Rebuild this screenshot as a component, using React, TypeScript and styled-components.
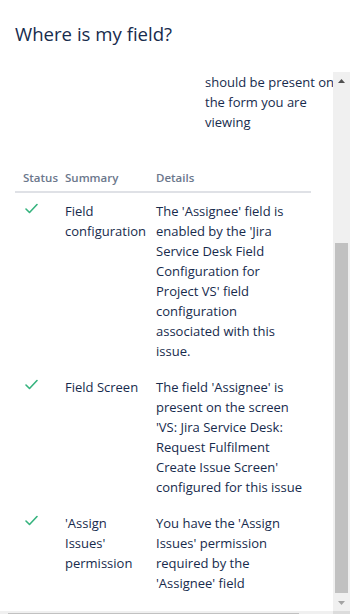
import React, { useLayoutEffect, useRef } from "react";
import styled, { createGlobalStyle } from "styled-components";

const GlobalStyle = createGlobalStyle`
  html, body {
    margin: 0;
    padding: 0;
    height: 100%;
    overflow: hidden;
    background: #fff;
  }
  body {
    font-family: "Segoe UI", "Open Sans", "Noto Sans", sans-serif;
    color: #172b4d;
  }
`;

interface ICheck {
  key: string;
  summary: string;
  details: string;
}

const checks: ICheck[] = [
  {
    key: "config",
    summary: "Field configuration",
    details:
      "The 'Assignee' field is enabled by the 'Jira Service Desk Field Configuration for Project VS' field configuration associated with this issue.",
  },
  {
    key: "screen",
    summary: "Field Screen",
    details:
      "The field 'Assignee' is present on the screen 'VS: Jira Service Desk: Request Fulfilment Create Issue Screen' configured for this issue",
  },
  {
    key: "permission",
    summary: "'Assign Issues' permission",
    details:
      "You have the 'Assign Issues' permission required by the 'Assignee' field",
  },
];

const CheckIcon = () => (
  <svg width="13" height="11" viewBox="0 0 13 11" fill="none">
    <polyline
      points="1,6 4.5,9.5 12,1.5"
      stroke="#36b37e"
      strokeWidth="1.6"
      strokeLinecap="round"
      strokeLinejoin="round"
    />
  </svg>
);

const Arrow = ({ up, color }: { up?: boolean; color: string }) => (
  <svg width="7" height="4" viewBox="0 0 7 4">
    <polygon points={up ? "0,4 3.5,0 7,4" : "0,0 3.5,4 7,0"} fill={color} />
  </svg>
);

const App = () => {
  const viewportRef = useRef<HTMLDivElement>(null);

  useLayoutEffect(() => {
    const el = viewportRef.current;
    if (el) el.scrollTop = el.scrollHeight;
  }, []);

  return (
    <>
      <GlobalStyle />
      <Page>
        <Title>Where is my field?</Title>
        <ScrollArea>
          <Viewport ref={viewportRef}>
            <Content>
              <ResultRow>
                <ResultLabel>Field</ResultLabel>
                <ResultValue>Assignee</ResultValue>
              </ResultRow>
              <ResultRow>
                <ResultLabel>Issue</ResultLabel>
                <ResultValue>VS-12</ResultValue>
              </ResultRow>
              <ResultRow>
                <ResultLabel>Result</ResultLabel>
                <ResultValue>
                  The 'Assignee' field should be present on the form you are
                  viewing
                </ResultValue>
              </ResultRow>
              <Table>
                <colgroup>
                  <col style={{ width: 42 }} />
                  <col style={{ width: 91 }} />
                  <col />
                </colgroup>
                <thead>
                  <tr>
                    <Th>Status</Th>
                    <Th>Summary</Th>
                    <Th>Details</Th>
                  </tr>
                </thead>
                <tbody>
                  {checks.map((c) => (
                    <tr key={c.key}>
                      <StatusCell>
                        <CheckIcon />
                      </StatusCell>
                      <Td>{c.summary}</Td>
                      <DetailsCell>{c.details}</DetailsCell>
                    </tr>
                  ))}
                </tbody>
              </Table>
            </Content>
          </Viewport>
          <VTrack>
            <ScrollButton>
              <Arrow up color="#505050" />
            </ScrollButton>
            <VThumbSlot>
              <VThumb />
            </VThumbSlot>
            <ScrollButton>
              <Arrow color="#a3a3a3" />
            </ScrollButton>
          </VTrack>
          <HTrack>
            <HThumb />
          </HTrack>
          <Corner />
        </ScrollArea>
      </Page>
    </>
  );
};

const Page = styled.div`
  display: flex;
  flex-direction: column;
`;
const Title = styled.h2`
  margin: 0;
  padding: 21px 15px 0;
  font-size: 18.6px;
  line-height: 26px;
  font-weight: 400;
  color: #172b4d;
`;
const ScrollArea = styled.div`
  margin-top: 25px;
  display: grid;
  grid-template-columns: 1fr 17px;
  grid-template-rows: 539px 17px;
`;
const Viewport = styled.div`
  overflow: hidden;
  min-width: 0;
`;
const Content = styled.div`
  width: 350px;
  padding: 0 0 10px 15px;
  box-sizing: border-box;
  font-size: 13px;
  line-height: 20px;
`;
const ResultRow = styled.div`
  display: grid;
  grid-template-columns: 190px 140px;
  padding: 4px 0;
`;
const ResultLabel = styled.div`
  color: #6b778c;
  font-weight: 600;
`;
const ResultValue = styled.div``;
const Table = styled.table`
  margin-top: 29px;
  width: 296px;
  border-collapse: collapse;
  table-layout: fixed;
`;
const Th = styled.th`
  text-align: left;
  padding: 4px 0 4px 8px;
  font-size: 11.5px;
  line-height: 18px;
  font-weight: 600;
  color: #6b778c;
  border-bottom: 2px solid #dfe1e6;
  white-space: nowrap;
`;
const Td = styled.td`
  vertical-align: top;
  padding: 8px 0 8px 8px;
`;
const DetailsCell = styled(Td)`
  padding-right: 8px;
`;
const StatusCell = styled(Td)`
  padding-left: 10px;
  padding-top: 10px;
  line-height: 0;
`;
const VTrack = styled.div`
  display: flex;
  flex-direction: column;
  background: #f0f0f0;
`;
const ScrollButton = styled.div`
  height: 17px;
  display: flex;
  align-items: center;
  justify-content: center;
  flex: none;
`;
const VThumbSlot = styled.div`
  flex: 1;
  display: flex;
  flex-direction: column;
  justify-content: flex-end;
  padding: 0 2px 1px;
`;
const VThumb = styled.div`
  height: 350px;
  background: #c1c1c1;
`;
const HTrack = styled.div`
  background: #f0f0f0;
  padding: 2px 0 0 8px;
`;
const HThumb = styled.div`
  width: 291px;
  height: 13px;
  background: #c1c1c1;
`;
const Corner = styled.div`
  background: #dcdcdc;
`;

export default App;
